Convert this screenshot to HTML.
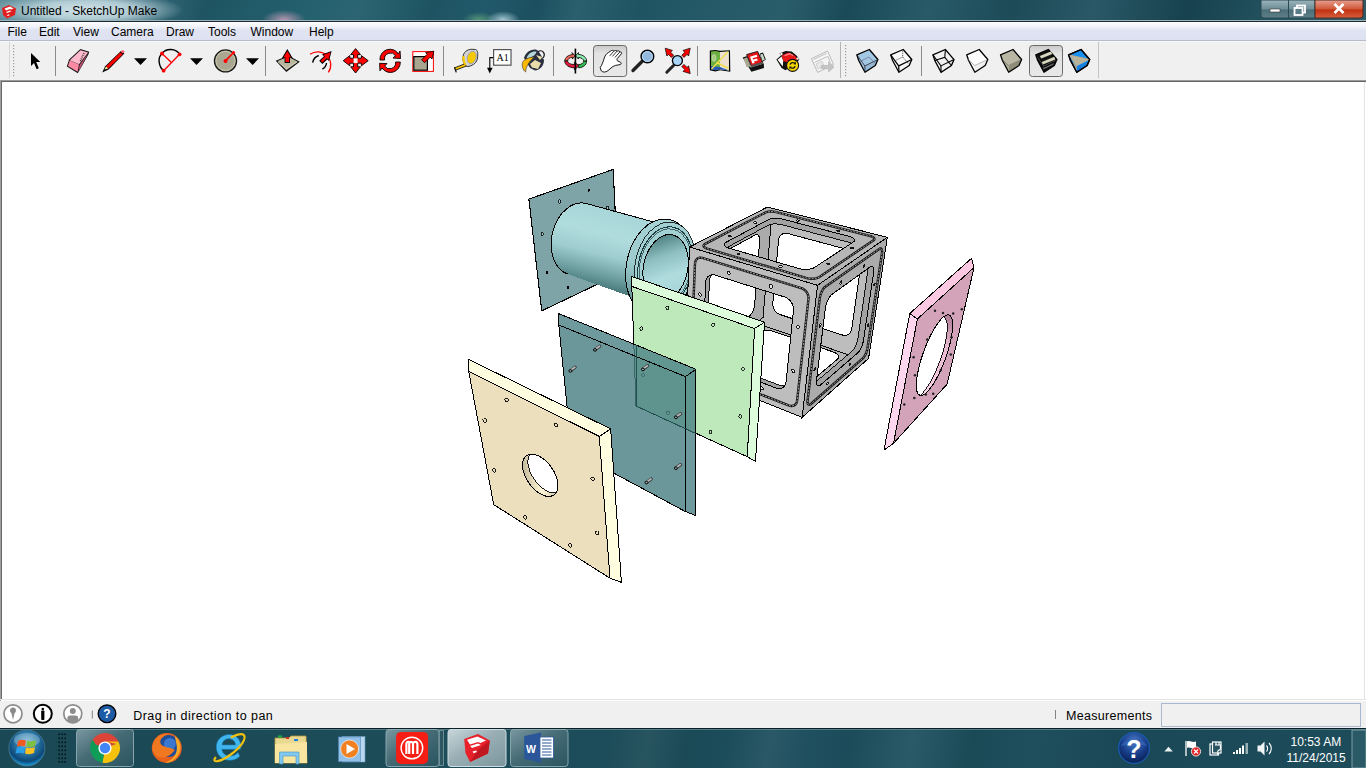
<!DOCTYPE html>
<html><head><meta charset="utf-8">
<style>
*{margin:0;padding:0;box-sizing:border-box}
html,body{width:1366px;height:768px;overflow:hidden;background:#fff;font-family:"Liberation Sans",sans-serif}
.a{position:absolute}
#title{left:0;top:0;width:1366px;height:20px;overflow:hidden;background:linear-gradient(105deg,#5e8e9a 0px,#3e7080 120px,#1f5563 200px,#24606e 300px,#2c6472 350px,#1e5462 420px,#22596a 470px,#1c5060 520px,#2a606e 560px,#1f5563 620px,#265a68 700px,#2a5d6a 760px,#1a4a58 820px,#285a68 900px,#1d4b58 980px,#2a5866 1060px,#17414e 1150px,#23525e 1230px,#335f6a 1300px,#2a5560 1366px)}
#title .t{left:21px;top:4px;font-size:12px;color:#000}
#menu{left:0;top:22px;width:1366px;height:18px;background:linear-gradient(#fdfdff 0%,#f1f3fa 25%,#e0e4f2 45%,#dde1f1 100%)}
#menu span{position:absolute;top:3px;font-size:12px;color:#000}
#tb{left:0;top:40px;width:1366px;height:40px;background:#f0f0f0;border-top:1px solid #b8bcc8}
#canvas{left:0;top:80px;width:1366px;height:621px;background:#fff;border-top:1px solid #9a9a9a;border-left:1px solid #a0a0a0}
#status{left:0;top:701px;width:1366px;height:27px;background:#f0f0f0}
#task{left:0;top:728px;width:1366px;height:40px;background:linear-gradient(100deg,#1a4854 0px,#1c4c58 300px,#1d4d5a 600px,#27545f 640px,#1b4a57 680px,#1c4d5a 720px,#2a5866 760px,#1f5060 800px,#1c4c5a 840px,#2a5a68 900px,#1b4a57 960px,#1f4f5d 1020px,#1b4856 1100px,#1d4c5a 1366px)}
#status span{position:absolute;top:708px;font-size:12px;color:#000}
</style></head><body>
<svg width="0" height="0" style="position:absolute"><defs><linearGradient id="pressg" x1="0" y1="0" x2="0" y2="1"><stop offset="0" stop-color="#c8c8c8"/><stop offset="0.25" stop-color="#e2e2e2"/><stop offset="1" stop-color="#e8e8e8"/></linearGradient></defs></svg>
<div id="title" class="a"><div class="a" style="left:-12px;top:-8px;width:196px;height:36px;background:radial-gradient(ellipse 50% 50% at 50% 50%,rgba(215,232,236,0.95) 0%,rgba(195,218,225,0.85) 50%,rgba(120,165,175,0) 100%)"></div><div class="a" style="left:262px;top:10px;width:44px;height:20px;background:radial-gradient(ellipse 50% 50% at 50% 50%,rgba(230,170,200,0.75) 0%,rgba(200,150,180,0) 100%)"></div><div class="a" style="left:462px;top:12px;width:34px;height:16px;background:radial-gradient(ellipse 50% 50% at 50% 50%,rgba(120,190,130,0.6) 0%,rgba(120,190,130,0) 100%)"></div><div class="a" style="left:486px;top:11px;width:34px;height:18px;background:radial-gradient(ellipse 50% 50% at 50% 50%,rgba(200,230,240,0.8) 0%,rgba(200,230,240,0) 100%)"></div><svg class="a" style="left:1px;top:3px" width="16" height="16" viewBox="0 0 16 16"><path d="M1 5 L8 2 L15 5.5 L14 12 L6 15.5 L2 12Z" fill="#e02020"/><path d="M3.5 5.5 L9 3.5 L12.5 5.5 L10 6.5 L9 6 L5 7.5Z M5 9 L9 7.5 L10.5 8.3 L6.2 10Z M6 12 L8 11.3 L8.6 12.2 L6.6 13Z" fill="#fff"/></svg><div class="a t">Untitled - SketchUp Make</div></div>
<div id="menu" class="a"><span style="left:7.5px">File</span><span style="left:39px">Edit</span><span style="left:73px">View</span><span style="left:111px">Camera</span><span style="left:166px">Draw</span><span style="left:208px">Tools</span><span style="left:250.5px">Window</span><span style="left:309px">Help</span></div>
<div id="tb" class="a"></div>
<div id="canvas" class="a"></div><div class="a" style="left:1px;top:81px;width:1365px;height:1px;background:#666"></div><div class="a" style="left:1px;top:81px;width:1px;height:618px;background:#696969"></div><div class="a" style="left:0;top:699px;width:1366px;height:1px;background:#e3e3e3"></div><div class="a" style="left:1364px;top:82px;width:1px;height:617px;background:#e3e3e3"></div><div class="a" style="left:0;top:20px;width:1366px;height:1px;background:#9cb2ba"></div><div class="a" style="left:0;top:21px;width:1366px;height:1px;background:#1c2c32"></div><div class="a" style="left:0;top:41px;width:1366px;height:1px;background:#f5f7fb"></div>
<div id="status" class="a"></div>
<div class="a" style="left:133.2px;top:708.5px;font-size:12.5px;letter-spacing:0.45px;color:#000">Drag in direction to pan</div>
<div class="a" style="left:1066px;top:708.5px;font-size:12.5px;letter-spacing:0.3px;color:#000">Measurements</div>
<div id="task" class="a"></div>
<svg class="a" style="left:0;top:0" width="1366" height="80" viewBox="0 0 1366 80">
<!-- toolbar frame -->
<line x1="9.5" y1="42" x2="9.5" y2="78" stroke="#d6d6d6"/>
<g fill="#9a9a9a"><rect x="13" y="45" width="1.2" height="1.2"/><rect x="13" y="48" width="1.2" height="1.2"/><rect x="13" y="51" width="1.2" height="1.2"/><rect x="13" y="54" width="1.2" height="1.2"/><rect x="13" y="57" width="1.2" height="1.2"/><rect x="13" y="60" width="1.2" height="1.2"/><rect x="13" y="63" width="1.2" height="1.2"/><rect x="13" y="66" width="1.2" height="1.2"/><rect x="13" y="69" width="1.2" height="1.2"/><rect x="13" y="72" width="1.2" height="1.2"/><rect x="13" y="75" width="1.2" height="1.2"/></g>
<g stroke="#8a8a8a" stroke-width="1"><line x1="55.5" y1="46" x2="55.5" y2="76"/><line x1="265.5" y1="46" x2="265.5" y2="76"/><line x1="443.5" y1="46" x2="443.5" y2="76"/><line x1="553.5" y1="46" x2="553.5" y2="76"/><line x1="697.5" y1="46" x2="697.5" y2="76"/><line x1="921.5" y1="46" x2="921.5" y2="76"/></g>
<line x1="840.5" y1="42" x2="840.5" y2="78" stroke="#b4b4b4"/>
<line x1="1098.5" y1="42" x2="1098.5" y2="78" stroke="#c4c4c4"/>
<g fill="#9a9a9a"><rect x="845" y="45" width="1.2" height="1.2"/><rect x="845" y="48" width="1.2" height="1.2"/><rect x="845" y="51" width="1.2" height="1.2"/><rect x="845" y="54" width="1.2" height="1.2"/><rect x="845" y="57" width="1.2" height="1.2"/><rect x="845" y="60" width="1.2" height="1.2"/><rect x="845" y="63" width="1.2" height="1.2"/><rect x="845" y="66" width="1.2" height="1.2"/><rect x="845" y="69" width="1.2" height="1.2"/><rect x="845" y="72" width="1.2" height="1.2"/><rect x="845" y="75" width="1.2" height="1.2"/></g>
<!-- select -->
<path d="M31 53 L31 66 L34 63 L36.6 69.2 L38.8 68.2 L36.2 62 L40.3 62 Z" fill="#000"/>
<!-- eraser -->
<path d="M66.8 66.6 L69.1 59.4 L80.4 49.1 L89.3 51.7 L88.3 54.8 L77.8 73.2 Z" fill="#1a1a1a"/>
<path d="M68 66 L69.8 60.5 L79 64.6 L77.6 71.8 Z" fill="#ff8aa3"/>
<path d="M69.8 60.2 L80.5 50.2 L88 52.4 L79 64.2 Z" fill="#ffb8cc"/>
<path d="M79.6 65 L88 53.5 L78.5 71.5 Z" fill="#c05070"/>
<path d="M84 53 L80 62" stroke="#333" stroke-width="1.5" stroke-dasharray="1 1"/>
<!-- pencil -->
<path d="M102.2 72.4 L105.2 66.2 L121.2 50.8 L124.4 53.4 L108.6 69.4 Z" fill="#000"/>
<path d="M106 66.6 L120.2 52.5 L122.6 54.4 L108.2 68.6 Z" fill="#f00"/>
<path d="M104.5 69.6 L106 66.6 L108.2 68.6 Z" fill="#f8f0a0"/>
<path d="M120.6 51.6 L123 49.9 L124.8 51.8 L122.7 53.6 Z" fill="#ff6070"/>
<!-- dropdowns -->
<path d="M134 58.2 L147 58.2 L140.5 65 Z" fill="#000"/>
<path d="M190 58.2 L203 58.2 L196.5 65 Z" fill="#000"/>
<path d="M246 58.2 L259 58.2 L252.6 65 Z" fill="#000"/>
<!-- arc -->
<path d="M162 53.5 C 166 48 176 48 179.6 54.3" fill="none" stroke="#000" stroke-width="1.4"/>
<path d="M162 53.5 C 157 58 159 67 163.6 70.7" fill="none" stroke="#000" stroke-width="1.4"/>
<path d="M163.6 70.7 L179.6 54.3 M162 53.5 L171.2 62.2" stroke="#f00" stroke-width="1.3"/>
<circle cx="162" cy="53.5" r="1.9" fill="#f00"/><circle cx="179.6" cy="54.3" r="1.9" fill="#f00"/><circle cx="163.6" cy="70.7" r="1.9" fill="#f00"/>
<!-- protractor -->
<circle cx="225.5" cy="60.9" r="11" fill="#a9a791" stroke="#1a1a1a" stroke-width="1.4"/>
<circle cx="225.5" cy="60.9" r="9.6" fill="none" stroke="#d8d4b4" stroke-width="0.7"/>
<path d="M225.5 60.9 L233.7 52.2" stroke="#f00" stroke-width="1.6"/>
<circle cx="225.5" cy="60.9" r="2" fill="#f00"/><circle cx="233.5" cy="52.6" r="1.6" fill="#f00"/>
<!-- push pull -->
<path d="M275.7 60.7 L288.3 55.6 L299.8 61.7 L286.3 72 Z" fill="#111"/>
<path d="M277.6 61 L288.3 56.8 L297.8 61.8 L286.3 70.2 Z" fill="#b9b79e"/>
<path d="M278 62 L286.3 68.5 L297 62" fill="none" stroke="#d8d6c0" stroke-width="0.8"/>
<path d="M287.3 49 L292.6 58 L290 58 L290 63 L284.6 63 L284.6 58 L282 58 Z" fill="#000"/>
<path d="M287.3 51 L291 57.2 L289.2 57.2 L289.2 62 L285.4 62 L285.4 57.2 L283.6 57.2 Z" fill="#f00"/>
<!-- follow me -->
<path d="M310.1 54.3 A 13 13 0 0 1 328.3 72.4" fill="none" stroke="#f00" stroke-width="1.3"/>
<path d="M312.7 62.7 A 9 9 0 0 1 318.8 55.5 M322.4 69.1 A 8 8 0 0 0 326.5 63" fill="none" stroke="#000" stroke-width="1.4"/>
<path d="M331.6 51 L329 61 L327.2 59.4 L322.4 64 L319.2 60.8 L324 56.2 L322 54.4 Z" fill="#000"/>
<path d="M330.6 52.2 L328.4 59.6 L326.8 58.2 L322.4 62.5 L320.6 60.8 L325 56.4 L323.4 55 Z" fill="#f00"/>
<!-- move -->
<path d="M355.6 48.6 L360.5 54.6 L357.7 54.6 L357.7 58.2 L361.4 58.2 L361.4 55.6 L368.2 60.7 L361.4 65.8 L361.4 63.2 L357.7 63.2 L357.7 66.8 L360.5 66.8 L355.6 73 L350.7 66.8 L353.5 66.8 L353.5 63.2 L349.8 63.2 L349.8 65.8 L343.2 60.7 L349.8 55.6 L349.8 58.2 L353.5 58.2 L353.5 54.6 L350.7 54.6 Z" fill="#f00" stroke="#000" stroke-width="0.9"/>
<rect x="353.6" y="58.3" width="4" height="4.8" fill="#f4f4f4"/>
<!-- rotate -->
<path d="M380 60 A 10 10 0 0 1 398.5 54 L400 51 L400.5 58.5 L393 58 L395.6 55.8 A 6 6 0 0 0 384.6 60 Z" fill="#f00" stroke="#000" stroke-width="0.9"/>
<path d="M400.3 62 A 10 10 0 0 1 382 68 L380 70.8 L379.6 63.3 L387 63.6 L384.6 66 A 6 6 0 0 0 395.6 62 Z" fill="#f00" stroke="#000" stroke-width="0.9"/>
<!-- scale -->
<rect x="412.8" y="51.6" width="20.6" height="19.8" fill="#fff" stroke="#f00" stroke-width="1"/>
<rect x="413.8" y="56.6" width="13.6" height="13.6" fill="#a8a68e" stroke="#000" stroke-width="1.2"/>
<path d="M433.8 51.2 L432 59 L430.2 57.2 L424.6 62.8 L421.6 59.8 L427.2 54.2 L425.6 52.6 Z" fill="#f00" stroke="#000" stroke-width="0.8"/>
<!-- tape -->
<path d="M454 68 L465.5 63.6 L466.5 66 L456 70" fill="#f5c400" stroke="#000" stroke-width="0.8"/>
<path d="M454.5 67.5 L456.3 72.4" stroke="#111" stroke-width="1.3"/>
<path d="M463 58 C 463 52 467 49.3 472 49.3 L 475.5 49.5 C 478 50.5 478 53 477.5 58 C 477 62 474 65.5 468 66.5 L 466 66 C 463.5 64 462.8 61 463 58 Z" fill="#d4d4d8" stroke="#222" stroke-width="0.9"/>
<ellipse cx="471.7" cy="57.5" rx="4.4" ry="6.4" transform="rotate(20 471.7 57.5)" fill="#f5c800" stroke="#8898c8" stroke-width="0.7"/>
<path d="M463.5 56 C 463.2 60 464 63 466 65" fill="none" stroke="#f5c800" stroke-width="2.2"/>
<!-- text -->
<rect x="493.6" y="49.6" width="17.4" height="15.6" fill="#fff" stroke="#555" stroke-width="1.2"/>
<text x="496.5" y="61" font-family="Liberation Serif" font-size="10" fill="#000">A1</text>
<path d="M493.2 57.6 L489.8 57.6 L489.8 70" fill="none" stroke="#000" stroke-width="1.1"/>
<path d="M487 67.8 L492.6 67.8 L489.8 73.5 Z" fill="#000"/>
<!-- paint -->
<path d="M524 58 C 526 51 533 48.5 537 50 L 539 52 L 544 60 C 544 66 540 70 535 70.5 L 530 68 L 527 63 Z" fill="#2a2f40"/>
<path d="M526.5 58.6 C 528 53 533 50.8 536.5 51.8 C 536 55 531 58 526.5 58.6 Z" fill="#b4d8d8"/>
<path d="M530 64 L 535 60 L 541 63 L 538 69 L 532 67.5 Z" fill="#e8dcaa"/>
<path d="M536 55 L 540 60 L 542.5 57 Z" fill="#e8dcaa"/>
<path d="M538 51.5 C 543 49 546 54 543 58" fill="none" stroke="#111" stroke-width="1.2"/>
<path d="M534.3 57 C 529 57.5 524 59 522.5 62.5 C 521.5 66 523 70 525.6 72 C 526 68 527.5 63 534.3 57 Z" fill="#f8b800" stroke="#333" stroke-width="0.6"/>
<!-- orbit -->
<path d="M564.8 61 C 564.8 57.5 568 55.2 572.5 54.6 L 572 52.6 L 575 55.8 L 572.4 59 L 572.3 57.2 C 569.5 57.6 567.8 59 567.6 61 Z" fill="#f46a58" stroke="#111" stroke-width="0.9" stroke-linejoin="round"/>
<path d="M564.8 61 C 564.8 65 569 67.6 574.5 67.9 L 574.6 70 L 579 65.4 L 574.4 62.4 L 574.5 64.6 C 570.5 64.4 567.8 63 567.6 61 Z" fill="#e8183a" stroke="#111" stroke-width="0.9" stroke-linejoin="round"/>
<path d="M586.6 61.2 C 586.6 57.2 583 54.8 578.4 54.4 L 578.4 52.6 L 575.6 55.9 L 578.4 59 L 578.4 57.4 C 581.8 57.8 583.6 59.2 583.8 61.2 Z" fill="#8af0b0" stroke="#111" stroke-width="0.9" stroke-linejoin="round"/>
<path d="M586.6 61.2 C 586.6 65 583 67.4 578.8 67.9 L 578.4 64.8 C 581.6 64.4 583.6 63 583.8 61.2 Z" fill="#2ec050" stroke="#111" stroke-width="0.9" stroke-linejoin="round"/>
<path d="M575.4 48.6 L 575.4 73.5" stroke="#000" stroke-width="1.6"/>
<!-- pan pressed -->
<rect x="593.5" y="45.5" width="33.2" height="31" rx="3" fill="url(#pressg)" stroke="#6a6a6a" stroke-width="1"/>
<path d="M600.2 67.6 C 602 65 603.2 61.5 604.2 58.2 C 605 55.5 606.5 53.6 608.6 52.4 L 611.4 50.6 C 612.4 50 613.6 50.4 613.8 51.2 C 614.8 50.4 616.4 50.2 617.2 51 C 618.2 50.6 619.6 50.8 619.8 52 C 620.8 51.8 622 52.4 621.6 53.6 L 617.4 58.4 C 616.6 59.4 616.8 60.6 617.8 61 L 620.4 62.2 C 621.4 62.8 621.4 64.2 620.2 64.6 L 615.6 65.4 C 613.6 65.8 612.4 66.8 611 68 L 608 70.6 C 605.5 72.6 603 72.4 601.4 71 Z" fill="#fff" stroke="#000" stroke-width="0.9" stroke-linejoin="round"/>
<path d="M613.8 51.2 L 609.8 55.8 M617.2 51 L 612.4 56.4 M619.8 52 L 614.8 57.6" stroke="#000" stroke-width="0.8"/>
<!-- zoom -->
<path d="M633 70.5 L 642 61.5" stroke="#222" stroke-width="3.4" stroke-linecap="round"/>
<circle cx="647.4" cy="56.5" r="6.3" fill="#95b9de" stroke="#000" stroke-width="1.5"/>
<circle cx="647.4" cy="56.5" r="5" fill="none" stroke="#b8e0f8" stroke-width="0.9"/>
<!-- zoom extents -->
<path d="M666.8 72.2 L 673.5 65.5" stroke="#222" stroke-width="3" stroke-linecap="round"/>
<circle cx="677.4" cy="60.6" r="5" fill="#a8d4f8" stroke="#000" stroke-width="1.3"/>
<path d="M665.2 48.2 L 672.4 50.4 L 670.6 52.2 L 673.6 55.2 L 671.4 57.4 L 668.4 54.4 L 666.8 56 Z" fill="#f00" stroke="#000" stroke-width="0.7"/>
<path d="M690.2 48.2 L 683 50.4 L 684.8 52.2 L 681.8 55.2 L 684 57.4 L 687 54.4 L 688.6 56 Z" fill="#f00" stroke="#000" stroke-width="0.7"/>
<path d="M690.2 73.6 L 683 71.4 L 684.8 69.6 L 681.8 66.6 L 684 64.4 L 687 67.4 L 688.6 65.8 Z" fill="#f00" stroke="#000" stroke-width="0.7"/>
<!-- map -->
<path d="M709.8 50.5 L 715.3 50 L 720 50.8 L 730 50.3 L 730.3 71.8 L 720 70.3 L 715.3 71.4 L 709.8 70.2 Z" fill="#000"/>
<path d="M711 51.5 L 715.3 51.1 L 720 51.9 L 728.8 51.4 L 729 70.4 L 720 69.2 L 715.3 70.3 L 711 69.2 Z" fill="#6ab040"/>
<path d="M720 51.9 L 728.8 51.4 L 729 70.4 L 720 69.2 Z" fill="#eee0d0"/>
<path d="M711 66 L 720 67 L 729 70.4 L 720 69.2 L 715.3 70.3 L 711 69.2 Z" fill="#2858b8"/>
<path d="M711.5 69 L 728 51.8 M716.5 62.5 L 729 68.5" stroke="#f0e050" stroke-width="1.4"/>
<ellipse cx="714" cy="58" rx="2" ry="3.4" fill="#a0d070" stroke="#ccc" stroke-width="0.8"/>
<!-- warehouse -->
<path d="M742.6 57.6 L 747.4 56 L 750.6 67.6 L 763.8 63.4 L 764 68 L 751.4 71.8 Z" fill="#111"/>
<path d="M743.6 58.4 L 747.4 57.2 L 750.4 66.4 L 746.6 67.2 Z" fill="#a8a890"/>
<path d="M759.8 53.4 L 763 52.6 L 765.8 59.4 L 762.4 62 Z" fill="#111"/>
<path d="M760.4 54.4 L 762.6 53.8 L 764.8 59.4 L 762.4 61 Z" fill="#c8d8c8"/>
<path d="M746.6 54.6 L 757.6 51.4 L 762.6 62.6 L 751.4 66.2 Z" fill="#e81418" stroke="#111" stroke-width="0.9"/>
<path d="M750 56.8 L 756.6 54.8 L 757.4 56.8 L 752.6 58.2 L 753.2 59.6 L 757 58.6 L 757.8 60.4 L 754 61.6 L 754.6 63 L 752.4 63.6 Z" fill="#fff"/>
<path d="M750.4 65.4 L 762.6 61.8 L 763.8 63.4 L 751.6 67.6 Z" fill="#555"/>
<!-- share -->
<path d="M776.4 59.6 L 781 55.6 L 779.4 53.4 L 785.6 51 L 791.6 51.6 L 796 55 L 799.4 59 L 797 63 L 785.4 70.2 L 781.6 68 Z" fill="#111"/>
<path d="M777.6 59.8 L 781.6 56.4 L 783.2 60.8 L 782.8 66.6 Z" fill="#fff"/>
<path d="M781.6 55.4 L 788.4 52.4 L 795 55.8 L 797.6 59.4 L 790 63.6 L 783.4 61 Z" fill="#e81818"/>
<path d="M784.6 55.6 L 790 53.6 L 793 55.4" fill="none" stroke="#ff9090" stroke-width="1.2"/>
<circle cx="781.4" cy="54" r="1.2" fill="#fff"/><circle cx="797.6" cy="58.6" r="1.2" fill="#fff"/>
<circle cx="792.6" cy="65.4" r="6" fill="#f8d800" stroke="#111" stroke-width="1.1"/>
<path d="M789.4 64.6 C 789.8 62.2 792.8 61.2 794.8 62.6 L 795.6 61.6 L 796 64.4 L 793.4 64.2 L 794.2 63.6 C 792.8 62.8 791 63.4 790.8 64.8 Z M795.8 66.2 C 795.4 68.6 792.4 69.6 790.4 68.2 L 789.6 69.2 L 789.2 66.4 L 791.8 66.6 L 791 67.2 C 792.4 68 794.2 67.4 794.4 66 Z" fill="#111"/>
<!-- dimmed -->
<path d="M811.4 58.6 L 827.6 51 L 833.6 64.6 L 817.6 72.4 Z" fill="#f4f4f4" stroke="#bbb" stroke-width="1"/>
<path d="M813.4 59.4 L 826.4 53.4 M 814.6 62.4 L 827.8 56.4 L 830.4 62.4" fill="none" stroke="#c0c0c0" stroke-width="1"/>
<path d="M816 64 L 822 61.2 L 824 66 L 818 68.8 Z" fill="#e8e8e8" stroke="#c8c8c8" stroke-width="0.8"/>
<path d="M821.4 65.4 L 828.6 65.4 L 828.6 61.8 L 834 67 L 828.6 72 L 828.6 68.6 L 821.4 68.6 Z" fill="#c4c4c4" stroke="#b0b0b0" stroke-width="0.6"/>
<polygon points="856.8,54.8 869.3,49.5 877.9,59.5 864.8,65.9" fill="#a3c8e4"/>
<polygon points="856.8,54.8 864.8,65.9 865.0,72.2 858.7,60.5" fill="#9cc2de"/>
<polygon points="864.8,65.9 877.9,59.5 875.3,65.5 865.0,72.2" fill="#94b8d4"/>

<polygon points="856.8,54.8 869.3,49.5 877.9,59.5 875.3,65.5 865.0,72.2 858.7,60.5" fill="none" stroke="#000" stroke-width="1.3" stroke-linejoin="round"/>
<polyline points="856.8,54.8 864.8,65.9 877.9,59.5" fill="none" stroke="#223" stroke-width="0.8"/>
<polyline points="864.8,65.9 865.0,72.2" fill="none" stroke="#223" stroke-width="0.8"/>
<polyline points="868.8,57.0 860.3,61.5" fill="none" stroke="#557" stroke-width="0.6"/>
<polyline points="868.8,57.0 875.8,64.0" fill="none" stroke="#557" stroke-width="0.6"/>
<polygon points="890.7,54.8 903.2,49.5 911.8,59.5 898.7,65.9" fill="#fafafa"/>
<polygon points="890.7,54.8 898.7,65.9 898.9,72.2 892.6,60.5" fill="#f8f8f8"/>
<polygon points="898.7,65.9 911.8,59.5 909.2,65.5 898.9,72.2" fill="#f4f4f4"/>

<polygon points="890.7,54.8 903.2,49.5 911.8,59.5 909.2,65.5 898.9,72.2 892.6,60.5" fill="none" stroke="#000" stroke-width="1.3" stroke-linejoin="round"/>
<polyline points="890.7,54.8 898.7,65.9 911.8,59.5" fill="none" stroke="#000" stroke-width="1.2"/>
<polyline points="898.7,65.9 898.9,72.2" fill="none" stroke="#000" stroke-width="1.2"/>
<polyline points="902.7,50.5 902.7,57.0 894.2,61.0" fill="none" stroke="#444" stroke-width="0.9" stroke-dasharray="1.2 1"/>
<polyline points="902.7,57.0 908.7,64.0" fill="none" stroke="#444" stroke-width="0.9" stroke-dasharray="1.2 1"/>
<polygon points="932.9,54.8 945.4,49.5 954.0,59.5 951.4,65.5 941.1,72.2 934.8,60.5" fill="none" stroke="#000" stroke-width="1.3"/>
<polyline points="932.9,54.8 940.9,65.9 954.0,59.5" fill="none" stroke="#000" stroke-width="1.1"/>
<polyline points="940.9,65.9 941.1,72.2" fill="none" stroke="#000" stroke-width="1.1"/>
<polyline points="945.4,49.5 944.8,57.3 934.8,60.5" fill="none" stroke="#000" stroke-width="1.1"/>
<polyline points="944.8,57.3 951.4,65.5" fill="none" stroke="#000" stroke-width="1.1"/>
<polygon points="966.7,54.8 979.2,49.5 987.8,59.5 974.7,65.9" fill="#fdfdfd"/>
<polygon points="966.7,54.8 974.7,65.9 974.9,72.2 968.6,60.5" fill="#f6f6f6"/>
<polygon points="974.7,65.9 987.8,59.5 985.2,65.5 974.9,72.2" fill="#f0f0f0"/>

<polygon points="966.7,54.8 979.2,49.5 987.8,59.5 985.2,65.5 974.9,72.2 968.6,60.5" fill="none" stroke="#000" stroke-width="1.3" stroke-linejoin="round"/>
<polyline points="968.2,59.5 974.7,65.5 987.2,59.8" fill="none" stroke="#999" stroke-width="0.7"/>
<polygon points="1000.5,54.8 1013.0,49.5 1021.6,59.5 1008.5,65.9" fill="#b9b7a3"/>
<polygon points="1000.5,54.8 1008.5,65.9 1008.7,72.2 1002.4,60.5" fill="#a9a792"/>
<polygon points="1008.5,65.9 1021.6,59.5 1019.0,65.5 1008.7,72.2" fill="#8f8d78"/>

<polygon points="1000.5,54.8 1013.0,49.5 1021.6,59.5 1019.0,65.5 1008.7,72.2 1002.4,60.5" fill="none" stroke="#000" stroke-width="1.3" stroke-linejoin="round"/>
<polyline points="1002.0,59.5 1008.5,65.5 1021.0,59.8" fill="none" stroke="#555" stroke-width="0.5"/>
<rect x="1029.5" y="45.5" width="33" height="31" rx="3" fill="url(#pressg)" stroke="#6a6a6a" stroke-width="1"/>
<polygon points="1035.8,54.8 1048.3,49.5 1056.9,59.5 1043.8,65.9" fill="#111"/>
<polygon points="1035.8,54.8 1043.8,65.9 1044.0,72.2 1037.7,60.5" fill="#111"/>
<polygon points="1043.8,65.9 1056.9,59.5 1054.3,65.5 1044.0,72.2" fill="#111"/>

<polygon points="1035.8,54.8 1048.3,49.5 1056.9,59.5 1054.3,65.5 1044.0,72.2 1037.7,60.5" fill="none" stroke="#000" stroke-width="1.3" stroke-linejoin="round"/>
<polygon points="1039.8,56.0 1050.8,51.5 1052.3,54.0 1041.3,58.5" fill="#d8d6be"/>
<polygon points="1041.8,62.0 1054.3,56.8 1055.3,59.5 1042.8,64.5" fill="#d8d6be"/>
<polygon points="1043.3,68.0 1053.8,63.2 1053.4,64.6 1043.6,69.2" fill="#777"/>
<polygon points="1068.6,54.8 1081.1,49.5 1089.7,59.5 1076.6,65.9" fill="#1890f0"/>
<polygon points="1068.6,54.8 1076.6,65.9 1076.8,72.2 1070.5,60.5" fill="#1070d0"/>
<polygon points="1076.6,65.9 1089.7,59.5 1087.1,65.5 1076.8,72.2" fill="#1480e0"/>

<polygon points="1068.6,54.8 1081.1,49.5 1089.7,59.5 1087.1,65.5 1076.8,72.2 1070.5,60.5" fill="none" stroke="#000" stroke-width="1.3" stroke-linejoin="round"/>
<polygon points="1068.6,54.8 1089.7,59.5 1076.6,65.9" fill="#b8b49c"/>
<polygon points="1068.6,54.8 1076.6,65.9 1076.8,72.2 1071.6,59.0" fill="#a8a48c"/>
<polyline points="1068.6,54.8 1089.7,59.5" fill="none" stroke="#d0a878" stroke-width="0.8"/>
<polygon points="1068.6,54.8 1081.1,49.5 1089.7,59.5 1087.1,65.5 1076.8,72.2 1070.5,60.5" fill="none" stroke="#000" stroke-width="1.3"/>
</svg>

<svg class="a" style="left:0;top:0" width="1366" height="768" viewBox="0 0 1366 768" shape-rendering="crispEdges">
<polygon points="528.9,199.1 613.2,169.4 618.2,274.3 541.7,310.9" fill="#7fa4a7" stroke="#000" stroke-width="1.1" stroke-linejoin="round" />
<ellipse cx="559.6" cy="201.5" rx="1.4" ry="1.7" fill="#a8c8ca" stroke="#000" stroke-width="0.8"/>
<ellipse cx="588.75" cy="190.2" rx="1.3" ry="1.6" fill="#000"/>
<ellipse cx="607.5" cy="208.1" rx="1.4" ry="1.7" fill="#a8c8ca" stroke="#000" stroke-width="0.8"/>
<ellipse cx="542.4" cy="234.2" rx="1.4" ry="1.7" fill="#a8c8ca" stroke="#000" stroke-width="0.8"/>
<ellipse cx="547" cy="272.4" rx="1.3" ry="1.6" fill="#000"/>
<ellipse cx="567.8" cy="287.4" rx="1.3" ry="1.6" fill="#000"/>
<defs><linearGradient id="cylg" gradientUnits="userSpaceOnUse" x1="590" y1="205" x2="570" y2="285"><stop offset="0" stop-color="#a8d6d8"/><stop offset="0.3" stop-color="#b0dcdd"/><stop offset="0.55" stop-color="#9fcdcf"/><stop offset="0.8" stop-color="#6a9c9e"/><stop offset="1" stop-color="#3c6c6e"/></linearGradient><linearGradient id="boreg" gradientUnits="userSpaceOnUse" x1="650" y1="240" x2="680" y2="290"><stop offset="0" stop-color="#4f8082"/><stop offset="0.35" stop-color="#8ebfc1"/><stop offset="0.7" stop-color="#b0dcde"/><stop offset="1" stop-color="#a8d6d8"/></linearGradient><linearGradient id="flg" gradientUnits="userSpaceOnUse" x1="640" y1="220" x2="640" y2="300"><stop offset="0" stop-color="#a6d3d5"/><stop offset="0.6" stop-color="#9ccbcd"/><stop offset="1" stop-color="#6d9ea0"/></linearGradient></defs>
<path d="M587.2 203.8 L659.2 223.5 L640.1 300.0 L568.1 274.2 A25.9 36.5 12.7 0 1 587.2 203.8 Z" fill="url(#cylg)" stroke="none" stroke-width="1" />
<path d="M568.1 274.2 A25.9 36.5 12.7 0 1 587.2 203.8 L659.2 223.5" fill="none" stroke="#000" stroke-width="1" />
<ellipse cx="660.05" cy="268.15" rx="33.8" ry="49.4" transform="rotate(9.7 660.05 268.15)" fill="url(#flg)" stroke="#000" stroke-width="1"/>
<ellipse cx="665.0" cy="266.5" rx="30.0" ry="45.0" transform="rotate(10.5 665 266.5)" fill="#a3d0d2" stroke="#000" stroke-width="0.8"/>
<ellipse cx="665.3" cy="267.0" rx="27.0" ry="40.6" transform="rotate(11 665.3 267)" fill="none" stroke="#1a3a3c" stroke-width="1.1"/>
<ellipse cx="665.3" cy="267.0" rx="25.6" ry="38.6" transform="rotate(11 665.3 267)" fill="none" stroke="#2a4a4c" stroke-width="0.8"/>
<ellipse cx="665.58" cy="267.9" rx="22.1" ry="33.7" transform="rotate(11.8 665.58 267.9)" fill="url(#boreg)" stroke="#000" stroke-width="1"/>
<defs>
<clipPath id="cz"><path d="M806.12 408.91 L866.68 355.66 L861.27 353.83 L863.97 351.49 L763.06 317.64 L760.09 319.66 L755.46 318.10 L688.76 363.00 L693.61 364.90 L689.96 367.38 L797.00 409.58 L800.37 406.66 Z"/></clipPath>
<clipPath id="cx"><path d="M860.51 358.91 L759.69 324.48 L760.09 319.66 L755.46 318.10 L763.80 214.17 L768.77 215.45 L769.23 209.94 L878.68 237.70 L877.80 243.56 L883.66 245.07 L866.68 355.66 L861.27 353.83 Z"/></clipPath>
<clipPath id="cy"><path d="M693.39 370.06 L759.69 324.48 L760.09 319.66 L763.06 317.64 L771.89 213.80 L768.77 215.45 L769.23 209.94 L698.67 246.59 L698.41 252.57 L694.53 254.61 L689.96 367.38 L693.61 364.90 Z"/></clipPath>
</defs>
<g clip-path="url(#cz)"><path d="M802.77 411.86 L869.36 353.30 L758.44 316.09 L685.10 365.46 Z M772.03 330.96 L770.37 330.49 L768.58 330.18 L766.74 330.03 L764.90 330.06 L763.15 330.25 L761.54 330.61 L760.13 331.12 L758.98 331.77 L719.17 359.54 L718.20 360.39 L717.59 361.32 L717.34 362.31 L717.48 363.32 L718.01 364.31 L718.90 365.24 L720.13 366.07 L721.64 366.77 L785.70 391.38 L787.60 391.99 L789.64 392.39 L791.75 392.58 L793.83 392.54 L795.81 392.29 L797.61 391.82 L799.15 391.17 L800.39 390.35 L837.61 359.06 L838.36 358.22 L838.75 357.29 L838.74 356.32 L838.36 355.34 L837.60 354.39 L836.51 353.51 L835.13 352.72 L833.51 352.05 Z" fill-rule="evenodd" fill="#b6b6b6" stroke="#000" stroke-width="1"/></g>
<path d="M806.12 408.91 L866.68 355.66 L861.27 353.83 L863.97 351.49 L763.06 317.64 L760.09 319.66 L755.46 318.10 L688.76 363.00 L693.61 364.90 L689.96 367.38 L797.00 409.58 L800.37 406.66 Z" fill="none" stroke="#000" stroke-width="0.9"/>
<g clip-path="url(#cx)"><path d="M865.90 360.75 L755.07 322.91 L764.24 208.68 L884.56 239.19 Z M778.53 240.30 L778.85 238.59 L779.48 237.03 L780.40 235.68 L781.56 234.59 L782.94 233.81 L784.48 233.36 L786.12 233.27 L787.79 233.53 L853.04 250.99 L854.84 251.66 L856.52 252.67 L858.02 253.98 L859.28 255.54 L860.25 257.28 L860.88 259.15 L861.17 261.07 L861.09 262.95 L851.72 329.11 L851.31 330.74 L850.58 332.20 L849.54 333.42 L848.26 334.36 L846.76 334.98 L845.13 335.27 L843.40 335.22 L841.67 334.82 L780.05 314.55 L778.50 313.87 L777.04 312.91 L775.73 311.69 L774.62 310.27 L773.74 308.69 L773.13 307.02 L772.82 305.32 L772.81 303.65 Z" fill-rule="evenodd" fill="#bdbdbd" stroke="#000" stroke-width="1"/></g>
<path d="M860.51 358.91 L759.69 324.48 L760.09 319.66 L755.46 318.10 L763.80 214.17 L768.77 215.45 L769.23 209.94 L878.68 237.70 L877.80 243.56 L883.66 245.07 L866.68 355.66 L861.27 353.83 Z" fill="none" stroke="#000" stroke-width="0.9"/>
<g clip-path="url(#cy)"><path d="M689.75 372.55 L762.65 322.45 L772.36 208.32 L694.77 248.61 Z M759.64 241.23 L759.67 239.53 L759.51 238.00 L759.14 236.71 L758.58 235.70 L757.86 235.02 L757.00 234.68 L756.03 234.71 L754.99 235.11 L712.82 258.15 L711.62 258.99 L710.44 260.17 L709.33 261.65 L708.33 263.36 L707.49 265.24 L706.84 267.22 L706.40 269.21 L706.19 271.14 L702.96 338.39 L702.99 340.02 L703.25 341.45 L703.73 342.60 L704.40 343.43 L705.24 343.92 L706.22 344.05 L707.30 343.81 L708.43 343.22 L748.81 316.41 L749.84 315.58 L750.84 314.47 L751.79 313.11 L752.65 311.57 L753.39 309.89 L753.98 308.14 L754.39 306.40 L754.62 304.71 Z" fill-rule="evenodd" fill="#ababab" stroke="#000" stroke-width="1"/></g>
<path d="M693.39 370.06 L759.69 324.48 L760.09 319.66 L763.06 317.64 L771.89 213.80 L768.77 215.45 L769.23 209.94 L698.67 246.59 L698.41 252.57 L694.53 254.61 L689.96 367.38 L693.61 364.90 Z" fill="none" stroke="#000" stroke-width="0.9"/>
<clipPath id="hw0"><path d="M705.77 282.14 L706.03 280.29 L706.62 278.61 L707.52 277.17 L708.69 276.03 L710.10 275.23 L711.68 274.80 L713.39 274.77 L715.15 275.13 L784.49 296.96 L786.42 297.77 L788.24 298.95 L789.87 300.46 L791.27 302.22 L792.36 304.18 L793.10 306.26 L793.48 308.37 L793.46 310.44 L786.03 382.23 L785.65 383.98 L784.93 385.52 L783.89 386.80 L782.57 387.75 L781.02 388.36 L779.31 388.58 L777.50 388.43 L775.65 387.91 L710.45 362.84 L708.81 362.03 L707.25 360.92 L705.84 359.54 L704.62 357.95 L703.65 356.20 L702.95 354.36 L702.55 352.51 L702.47 350.70 Z"/></clipPath>
<g clip-path="url(#hw0)"><path d="M705.77 282.14 L706.03 280.29 L706.62 278.61 L707.52 277.17 L708.69 276.03 L710.10 275.23 L711.68 274.80 L713.39 274.77 L715.15 275.13 L784.49 296.96 L786.42 297.77 L788.24 298.95 L789.87 300.46 L791.27 302.22 L792.36 304.18 L793.10 306.26 L793.48 308.37 L793.46 310.44 L786.03 382.23 L785.65 383.98 L784.93 385.52 L783.89 386.80 L782.57 387.75 L781.02 388.36 L779.31 388.58 L777.50 388.43 L775.65 387.91 L710.45 362.84 L708.81 362.03 L707.25 360.92 L705.84 359.54 L704.62 357.95 L703.65 356.20 L702.95 354.36 L702.55 352.51 L702.47 350.70 Z M709.57 279.95 L709.83 278.11 L710.42 276.44 L711.33 275.00 L712.50 273.86 L713.91 273.06 L715.49 272.63 L717.19 272.59 L718.95 272.95 L788.10 294.54 L790.02 295.35 L791.83 296.52 L793.46 298.01 L794.84 299.77 L795.93 301.72 L796.67 303.78 L797.04 305.88 L797.02 307.94 L789.47 379.45 L789.09 381.20 L788.37 382.73 L787.33 384.00 L786.01 384.96 L784.46 385.56 L782.75 385.80 L780.94 385.65 L779.11 385.13 L714.07 360.32 L712.44 359.53 L710.89 358.42 L709.48 357.05 L708.26 355.47 L707.29 353.73 L706.60 351.90 L706.21 350.05 L706.13 348.25 Z" fill-rule="evenodd" fill="#a2a2a2" stroke="#000" stroke-width="0.9"/></g>
<clipPath id="hw1"><path d="M873.55 273.00 L873.74 271.20 L873.74 269.59 L873.55 268.25 L873.18 267.21 L872.63 266.53 L871.94 266.24 L871.11 266.33 L870.20 266.83 L832.19 294.23 L831.08 295.21 L829.96 296.55 L828.88 298.20 L827.87 300.10 L826.98 302.17 L826.24 304.32 L825.68 306.48 L825.33 308.55 L816.50 380.12 L816.38 381.84 L816.48 383.32 L816.78 384.50 L817.28 385.32 L817.96 385.76 L818.78 385.81 L819.73 385.47 L820.75 384.75 L857.47 353.15 L858.41 352.20 L859.36 350.95 L860.29 349.45 L861.16 347.75 L861.93 345.93 L862.59 344.05 L863.10 342.18 L863.44 340.38 Z"/></clipPath>
<g clip-path="url(#hw1)"><path d="M873.55 273.00 L873.74 271.20 L873.74 269.59 L873.55 268.25 L873.18 267.21 L872.63 266.53 L871.94 266.24 L871.11 266.33 L870.20 266.83 L832.19 294.23 L831.08 295.21 L829.96 296.55 L828.88 298.20 L827.87 300.10 L826.98 302.17 L826.24 304.32 L825.68 306.48 L825.33 308.55 L816.50 380.12 L816.38 381.84 L816.48 383.32 L816.78 384.50 L817.28 385.32 L817.96 385.76 L818.78 385.81 L819.73 385.47 L820.75 384.75 L857.47 353.15 L858.41 352.20 L859.36 350.95 L860.29 349.45 L861.16 347.75 L861.93 345.93 L862.59 344.05 L863.10 342.18 L863.44 340.38 Z M867.75 271.38 L867.93 269.59 L867.92 267.98 L867.72 266.64 L867.34 265.61 L866.78 264.93 L866.08 264.63 L865.25 264.72 L864.32 265.21 L826.07 292.38 L824.96 293.36 L823.83 294.69 L822.75 296.33 L821.74 298.21 L820.85 300.27 L820.11 302.42 L819.56 304.57 L819.21 306.63 L810.70 377.98 L810.59 379.71 L810.69 381.18 L811.01 382.36 L811.52 383.18 L812.20 383.63 L813.04 383.68 L813.99 383.34 L815.01 382.63 L851.95 351.29 L852.90 350.34 L853.85 349.09 L854.78 347.60 L855.65 345.92 L856.42 344.10 L857.07 342.23 L857.58 340.36 L857.92 338.57 Z" fill-rule="evenodd" fill="#a2a2a2" stroke="#000" stroke-width="0.9"/></g>
<clipPath id="hw2"><path d="M782.25 219.07 L780.46 218.69 L778.55 218.43 L776.57 218.32 L774.61 218.33 L772.73 218.49 L771.01 218.78 L769.52 219.19 L768.30 219.71 L726.10 242.24 L725.07 242.92 L724.42 243.69 L724.17 244.50 L724.34 245.32 L724.92 246.13 L725.90 246.88 L727.23 247.57 L728.86 248.14 L798.49 268.39 L800.56 268.89 L802.78 269.22 L805.06 269.38 L807.31 269.35 L809.44 269.14 L811.37 268.76 L813.02 268.22 L814.33 267.55 L853.44 241.94 L854.22 241.25 L854.60 240.50 L854.57 239.71 L854.12 238.91 L853.27 238.14 L852.07 237.41 L850.56 236.77 L848.79 236.23 Z"/></clipPath>
<g clip-path="url(#hw2)"><path d="M782.25 219.07 L780.46 218.69 L778.55 218.43 L776.57 218.32 L774.61 218.33 L772.73 218.49 L771.01 218.78 L769.52 219.19 L768.30 219.71 L726.10 242.24 L725.07 242.92 L724.42 243.69 L724.17 244.50 L724.34 245.32 L724.92 246.13 L725.90 246.88 L727.23 247.57 L728.86 248.14 L798.49 268.39 L800.56 268.89 L802.78 269.22 L805.06 269.38 L807.31 269.35 L809.44 269.14 L811.37 268.76 L813.02 268.22 L814.33 267.55 L853.44 241.94 L854.22 241.25 L854.60 240.50 L854.57 239.71 L854.12 238.91 L853.27 238.14 L852.07 237.41 L850.56 236.77 L848.79 236.23 Z M781.74 224.69 L779.96 224.31 L778.04 224.05 L776.07 223.93 L774.12 223.95 L772.25 224.11 L770.54 224.40 L769.04 224.82 L767.83 225.35 L725.75 248.16 L724.73 248.86 L724.08 249.63 L723.83 250.45 L724.00 251.28 L724.57 252.10 L725.54 252.87 L726.87 253.56 L728.50 254.14 L797.85 274.63 L799.90 275.13 L802.11 275.47 L804.38 275.63 L806.62 275.60 L808.75 275.39 L810.67 275.01 L812.32 274.46 L813.63 273.78 L852.64 247.85 L853.42 247.16 L853.80 246.39 L853.77 245.59 L853.32 244.79 L852.48 244.00 L851.29 243.27 L849.78 242.62 L848.02 242.07 Z" fill-rule="evenodd" fill="#a2a2a2" stroke="#000" stroke-width="0.9"/></g>
<path d="M802.13 417.33 L684.91 370.62 L689.52 247.04 L817.54 285.32 Z M705.77 282.14 L706.03 280.29 L706.62 278.61 L707.52 277.17 L708.69 276.03 L710.10 275.23 L711.68 274.80 L713.39 274.77 L715.15 275.13 L784.49 296.96 L786.42 297.77 L788.24 298.95 L789.87 300.46 L791.27 302.22 L792.36 304.18 L793.10 306.26 L793.48 308.37 L793.46 310.44 L786.03 382.23 L785.65 383.98 L784.93 385.52 L783.89 386.80 L782.57 387.75 L781.02 388.36 L779.31 388.58 L777.50 388.43 L775.65 387.91 L710.45 362.84 L708.81 362.03 L707.25 360.92 L705.84 359.54 L704.62 357.95 L703.65 356.20 L702.95 354.36 L702.55 352.51 L702.47 350.70 Z" fill-rule="evenodd" fill="#bdbdbd" stroke="#000" stroke-width="1"/>
<path d="M694.98 263.73 L695.18 262.23 L695.64 260.86 L696.34 259.69 L697.27 258.75 L698.37 258.09 L699.62 257.72 L700.97 257.67 L702.36 257.94 L801.14 288.02 L802.73 288.68 L804.23 289.63 L805.57 290.85 L806.71 292.29 L807.60 293.89 L808.20 295.59 L808.50 297.32 L808.47 299.01 L797.03 401.02 L796.72 402.41 L796.13 403.62 L795.28 404.61 L794.21 405.35 L792.95 405.81 L791.56 405.97 L790.09 405.82 L788.60 405.38 L697.31 369.44 L696.03 368.81 L694.82 367.92 L693.71 366.84 L692.75 365.58 L691.99 364.21 L691.43 362.76 L691.11 361.31 L691.04 359.89 Z" fill="none" stroke="#111" stroke-width="2.4" shape-rendering="auto"/>
<path d="M694.98 263.73 L695.18 262.23 L695.64 260.86 L696.34 259.69 L697.27 258.75 L698.37 258.09 L699.62 257.72 L700.97 257.67 L702.36 257.94 L801.14 288.02 L802.73 288.68 L804.23 289.63 L805.57 290.85 L806.71 292.29 L807.60 293.89 L808.20 295.59 L808.50 297.32 L808.47 299.01 L797.03 401.02 L796.72 402.41 L796.13 403.62 L795.28 404.61 L794.21 405.35 L792.95 405.81 L791.56 405.97 L790.09 405.82 L788.60 405.38 L697.31 369.44 L696.03 368.81 L694.82 367.92 L693.71 366.84 L692.75 365.58 L691.99 364.21 L691.43 362.76 L691.11 361.31 L691.04 359.89 Z" fill="none" stroke="#c8c8c8" stroke-width="0.8" stroke-dasharray="2 1.2" shape-rendering="auto"/>
<path d="M791.56 370.11 L791.87 369.37 L792.55 368.99 L793.42 369.08 L794.24 369.61 L794.79 370.44 L794.93 371.35 L794.61 372.09 L793.93 372.47 L793.07 372.38 L792.25 371.85 L791.70 371.02 Z" fill="#e8e8e8" stroke="#000" stroke-width="0.9"/>
<path d="M796.20 326.53 L796.52 325.73 L797.23 325.30 L798.12 325.35 L798.97 325.88 L799.53 326.73 L799.67 327.69 L799.34 328.48 L798.64 328.91 L797.74 328.85 L796.90 328.33 L796.34 327.48 Z" fill="#e8e8e8" stroke="#000" stroke-width="0.9"/>
<path d="M696.58 335.26 L696.81 334.55 L697.37 334.17 L698.10 334.22 L698.82 334.70 L699.33 335.47 L699.49 336.33 L699.26 337.05 L698.70 337.43 L697.96 337.37 L697.24 336.89 L696.74 336.12 Z" fill="#e8e8e8" stroke="#000" stroke-width="0.9"/>
<path d="M698.39 293.88 L698.63 293.11 L699.20 292.69 L699.96 292.72 L700.70 293.19 L701.22 293.98 L701.39 294.88 L701.15 295.64 L700.57 296.06 L699.81 296.03 L699.08 295.56 L698.56 294.77 Z" fill="#e8e8e8" stroke="#000" stroke-width="0.9"/>
<path d="M760.23 387.62 L760.51 386.91 L761.14 386.56 L761.95 386.66 L762.72 387.18 L763.25 387.98 L763.39 388.85 L763.11 389.55 L762.48 389.90 L761.67 389.80 L760.90 389.28 L760.37 388.48 Z" fill="#e8e8e8" stroke="#000" stroke-width="0.9"/>
<path d="M720.97 372.36 L721.22 371.66 L721.80 371.31 L722.55 371.39 L723.29 371.89 L723.80 372.67 L723.95 373.51 L723.70 374.21 L723.12 374.56 L722.36 374.47 L721.63 373.98 L721.12 373.20 Z" fill="#e8e8e8" stroke="#000" stroke-width="0.9"/>
<path d="M769.10 285.78 L769.40 284.96 L770.08 284.49 L770.95 284.51 L771.78 285.02 L772.34 285.87 L772.49 286.83 L772.18 287.66 L771.50 288.12 L770.63 288.09 L769.81 287.59 L769.24 286.74 Z" fill="#e8e8e8" stroke="#000" stroke-width="0.9"/>
<path d="M727.02 272.73 L727.29 271.92 L727.91 271.46 L728.72 271.47 L729.50 271.96 L730.05 272.78 L730.21 273.72 L729.94 274.53 L729.31 274.98 L728.50 274.97 L727.72 274.49 L727.18 273.67 Z" fill="#e8e8e8" stroke="#000" stroke-width="0.9"/>
<path d="M802.13 417.33 L868.57 358.37 L887.35 237.27 L817.54 285.32 Z M873.55 273.00 L873.74 271.20 L873.74 269.59 L873.55 268.25 L873.18 267.21 L872.63 266.53 L871.94 266.24 L871.11 266.33 L870.20 266.83 L832.19 294.23 L831.08 295.21 L829.96 296.55 L828.88 298.20 L827.87 300.10 L826.98 302.17 L826.24 304.32 L825.68 306.48 L825.33 308.55 L816.50 380.12 L816.38 381.84 L816.48 383.32 L816.78 384.50 L817.28 385.32 L817.96 385.76 L818.78 385.81 L819.73 385.47 L820.75 384.75 L857.47 353.15 L858.41 352.20 L859.36 350.95 L860.29 349.45 L861.16 347.75 L861.93 345.93 L862.59 344.05 L863.10 342.18 L863.44 340.38 Z" fill-rule="evenodd" fill="#ababab" stroke="#000" stroke-width="1"/>
<path d="M881.89 254.05 L882.05 252.59 L882.06 251.29 L881.92 250.19 L881.64 249.33 L881.22 248.76 L880.68 248.50 L880.04 248.55 L879.32 248.91 L825.38 286.67 L824.46 287.46 L823.54 288.54 L822.64 289.89 L821.81 291.43 L821.08 293.12 L820.48 294.88 L820.03 296.65 L819.74 298.36 L807.61 400.26 L807.52 401.62 L807.61 402.78 L807.87 403.70 L808.29 404.33 L808.85 404.65 L809.52 404.66 L810.30 404.35 L811.13 403.74 L862.76 358.41 L863.49 357.66 L864.23 356.67 L864.95 355.49 L865.63 354.15 L866.24 352.72 L866.75 351.25 L867.15 349.78 L867.43 348.38 Z" fill="none" stroke="#111" stroke-width="2.4" shape-rendering="auto"/>
<path d="M881.89 254.05 L882.05 252.59 L882.06 251.29 L881.92 250.19 L881.64 249.33 L881.22 248.76 L880.68 248.50 L880.04 248.55 L879.32 248.91 L825.38 286.67 L824.46 287.46 L823.54 288.54 L822.64 289.89 L821.81 291.43 L821.08 293.12 L820.48 294.88 L820.03 296.65 L819.74 298.36 L807.61 400.26 L807.52 401.62 L807.61 402.78 L807.87 403.70 L808.29 404.33 L808.85 404.65 L809.52 404.66 L810.30 404.35 L811.13 403.74 L862.76 358.41 L863.49 357.66 L864.23 356.67 L864.95 355.49 L865.63 354.15 L866.24 352.72 L866.75 351.25 L867.15 349.78 L867.43 348.38 Z" fill="none" stroke="#c8c8c8" stroke-width="0.8" stroke-dasharray="2 1.2" shape-rendering="auto"/>
<path d="M815.82 368.47 L815.80 367.75 L815.52 367.44 L815.06 367.61 L814.55 368.23 L814.13 369.13 L813.90 370.06 L813.93 370.78 L814.21 371.09 L814.66 370.92 L815.17 370.30 L815.59 369.40 Z" fill="#e8e8e8" stroke="#000" stroke-width="0.9"/>
<path d="M821.13 324.99 L821.10 324.22 L820.82 323.85 L820.36 323.99 L819.84 324.60 L819.40 325.51 L819.16 326.48 L819.19 327.26 L819.47 327.62 L819.93 327.48 L820.45 326.87 L820.89 325.96 Z" fill="#e8e8e8" stroke="#000" stroke-width="0.9"/>
<path d="M868.95 324.60 L868.96 323.92 L868.75 323.59 L868.38 323.71 L867.95 324.25 L867.57 325.06 L867.35 325.92 L867.34 326.60 L867.55 326.93 L867.91 326.80 L868.34 326.27 L868.72 325.46 Z" fill="#e8e8e8" stroke="#000" stroke-width="0.9"/>
<path d="M875.12 283.97 L875.14 283.24 L874.93 282.87 L874.56 282.96 L874.12 283.48 L873.73 284.31 L873.50 285.20 L873.49 285.93 L873.69 286.30 L874.07 286.21 L874.50 285.69 L874.89 284.87 Z" fill="#e8e8e8" stroke="#000" stroke-width="0.9"/>
<path d="M828.55 382.84 L828.53 382.17 L828.28 381.88 L827.86 382.06 L827.38 382.66 L826.97 383.52 L826.75 384.41 L826.77 385.08 L827.02 385.37 L827.45 385.19 L827.92 384.59 L828.33 383.73 Z" fill="#e8e8e8" stroke="#000" stroke-width="0.9"/>
<path d="M850.68 363.63 L850.68 362.96 L850.45 362.67 L850.06 362.82 L849.62 363.39 L849.23 364.21 L849.01 365.07 L849.01 365.74 L849.24 366.03 L849.63 365.87 L850.07 365.30 L850.46 364.48 Z" fill="#e8e8e8" stroke="#000" stroke-width="0.9"/>
<path d="M841.83 281.75 L841.82 280.95 L841.57 280.54 L841.13 280.63 L840.63 281.21 L840.20 282.10 L839.96 283.08 L839.97 283.88 L840.23 284.28 L840.66 284.19 L841.16 283.61 L841.59 282.72 Z" fill="#e8e8e8" stroke="#000" stroke-width="0.9"/>
<path d="M864.83 265.39 L864.83 264.61 L864.61 264.20 L864.21 264.28 L863.75 264.82 L863.34 265.67 L863.10 266.62 L863.09 267.39 L863.32 267.80 L863.72 267.72 L864.18 267.18 L864.59 266.33 Z" fill="#e8e8e8" stroke="#000" stroke-width="0.9"/>
<path d="M817.54 285.32 L887.35 237.27 L767.38 207.07 L689.52 247.04 Z M782.25 219.07 L780.46 218.69 L778.55 218.43 L776.57 218.32 L774.61 218.33 L772.73 218.49 L771.01 218.78 L769.52 219.19 L768.30 219.71 L726.10 242.24 L725.07 242.92 L724.42 243.69 L724.17 244.50 L724.34 245.32 L724.92 246.13 L725.90 246.88 L727.23 247.57 L728.86 248.14 L798.49 268.39 L800.56 268.89 L802.78 269.22 L805.06 269.38 L807.31 269.35 L809.44 269.14 L811.37 268.76 L813.02 268.22 L814.33 267.55 L853.44 241.94 L854.22 241.25 L854.60 240.50 L854.57 239.71 L854.12 238.91 L853.27 238.14 L852.07 237.41 L850.56 236.77 L848.79 236.23 Z" fill-rule="evenodd" fill="#b6b6b6" stroke="#000" stroke-width="1"/>
<path d="M776.23 212.10 L774.84 211.81 L773.34 211.61 L771.79 211.52 L770.25 211.53 L768.77 211.66 L767.43 211.88 L766.25 212.19 L765.29 212.59 L705.20 243.86 L704.34 244.41 L703.79 245.03 L703.55 245.68 L703.65 246.34 L704.08 246.99 L704.83 247.60 L705.86 248.15 L707.15 248.61 L806.07 277.90 L807.77 278.32 L809.59 278.60 L811.46 278.73 L813.31 278.71 L815.05 278.53 L816.63 278.21 L817.97 277.76 L819.04 277.19 L873.53 240.33 L874.13 239.79 L874.40 239.19 L874.34 238.57 L873.94 237.93 L873.24 237.32 L872.25 236.74 L871.01 236.23 L869.57 235.80 Z" fill="none" stroke="#111" stroke-width="2.4" shape-rendering="auto"/>
<path d="M776.23 212.10 L774.84 211.81 L773.34 211.61 L771.79 211.52 L770.25 211.53 L768.77 211.66 L767.43 211.88 L766.25 212.19 L765.29 212.59 L705.20 243.86 L704.34 244.41 L703.79 245.03 L703.55 245.68 L703.65 246.34 L704.08 246.99 L704.83 247.60 L705.86 248.15 L707.15 248.61 L806.07 277.90 L807.77 278.32 L809.59 278.60 L811.46 278.73 L813.31 278.71 L815.05 278.53 L816.63 278.21 L817.97 277.76 L819.04 277.19 L873.53 240.33 L874.13 239.79 L874.40 239.19 L874.34 238.57 L873.94 237.93 L873.24 237.32 L872.25 236.74 L871.01 236.23 L869.57 235.80 Z" fill="none" stroke="#c8c8c8" stroke-width="0.8" stroke-dasharray="2 1.2" shape-rendering="auto"/>
<path d="M781.65 265.81 L780.66 265.64 L779.66 265.70 L778.91 265.95 L778.61 266.34 L778.85 266.76 L779.56 267.10 L780.56 267.26 L781.56 267.21 L782.31 266.95 L782.60 266.56 L782.36 266.14 Z" fill="#e8e8e8" stroke="#000" stroke-width="0.9"/>
<path d="M739.38 253.44 L738.44 253.29 L737.46 253.34 L736.71 253.58 L736.38 253.94 L736.57 254.33 L737.23 254.65 L738.17 254.80 L739.15 254.75 L739.90 254.51 L740.23 254.15 L740.04 253.76 Z" fill="#e8e8e8" stroke="#000" stroke-width="0.9"/>
<path d="M839.03 230.33 L838.11 230.20 L837.21 230.24 L836.56 230.45 L836.34 230.77 L836.62 231.12 L837.31 231.40 L838.23 231.53 L839.14 231.49 L839.79 231.28 L840.00 230.96 L839.72 230.61 Z" fill="#e8e8e8" stroke="#000" stroke-width="0.9"/>
<path d="M798.87 220.07 L797.99 219.95 L797.10 219.99 L796.45 220.18 L796.21 220.49 L796.44 220.81 L797.08 221.08 L797.96 221.20 L798.85 221.16 L799.50 220.96 L799.74 220.66 L799.51 220.33 Z" fill="#e8e8e8" stroke="#000" stroke-width="0.9"/>
<path d="M829.45 263.29 L828.45 263.13 L827.46 263.18 L826.75 263.43 L826.50 263.81 L826.79 264.23 L827.54 264.56 L828.55 264.72 L829.54 264.67 L830.25 264.42 L830.49 264.03 L830.20 263.62 Z" fill="#e8e8e8" stroke="#000" stroke-width="0.9"/>
<path d="M852.92 247.69 L851.95 247.54 L851.00 247.59 L850.33 247.82 L850.12 248.18 L850.42 248.56 L851.16 248.86 L852.13 249.01 L853.08 248.96 L853.75 248.73 L853.96 248.38 L853.65 248.00 Z" fill="#e8e8e8" stroke="#000" stroke-width="0.9"/>
<path d="M730.63 235.54 L729.73 235.40 L728.80 235.45 L728.08 235.66 L727.76 235.99 L727.93 236.35 L728.55 236.64 L729.44 236.78 L730.38 236.73 L731.10 236.51 L731.42 236.18 L731.24 235.83 Z" fill="#e8e8e8" stroke="#000" stroke-width="0.9"/>
<path d="M756.21 222.05 L755.34 221.92 L754.44 221.96 L753.76 222.16 L753.48 222.47 L753.67 222.80 L754.28 223.06 L755.15 223.19 L756.05 223.15 L756.73 222.95 L757.01 222.64 L756.82 222.31 Z" fill="#e8e8e8" stroke="#000" stroke-width="0.9"/>
<polygon points="909.8,313.5 971.5,258.3 974.0,267.5 917.4,319.0" fill="#fdc8e2" stroke="#000" stroke-width="1" stroke-linejoin="round" />
<polygon points="909.8,313.5 917.4,319.0 893.5,443.4 884.0,450.0" fill="#fed6ee" stroke="#000" stroke-width="1" stroke-linejoin="round" />
<polygon points="917.4,319.0 974.0,267.5 947.2,384.0 893.5,443.4" fill="#d3a4b9" stroke="#000" stroke-width="1" stroke-linejoin="round" />
<defs><linearGradient id="pkw" gradientUnits="userSpaceOnUse" x1="945" y1="312" x2="925" y2="395"><stop offset="0" stop-color="#a87890"/><stop offset="0.35" stop-color="#e8b8d0"/><stop offset="1" stop-color="#fcd8ea"/></linearGradient><clipPath id="pkh"><ellipse cx="934.5" cy="355.2" rx="11.4" ry="42.8" transform="rotate(20 934.5 355.2)"/></clipPath></defs>
<ellipse cx="934.5" cy="355.2" rx="11.4" ry="42.8" transform="rotate(20 934.5 355.2)" fill="url(#pkw)"/>
<g clip-path="url(#pkh)"><ellipse cx="929.2" cy="357.2" rx="11.4" ry="42.8" transform="rotate(20 929.2 357.2)" fill="#fff" stroke="#000" stroke-width="0.9"/></g>
<ellipse cx="934.5" cy="355.2" rx="11.4" ry="42.8" transform="rotate(20 934.5 355.2)" fill="none" stroke="#000" stroke-width="1"/>
<circle cx="935" cy="310.7" r="1.25" fill="#222" shape-rendering="auto"/>
<circle cx="943" cy="312.9" r="1.25" fill="#222" shape-rendering="auto"/>
<circle cx="953.2" cy="313.6" r="1.25" fill="#222" shape-rendering="auto"/>
<circle cx="961.8" cy="309.3" r="1.25" fill="#222" shape-rendering="auto"/>
<circle cx="951.5" cy="337.2" r="1.25" fill="#222" shape-rendering="auto"/>
<circle cx="927.2" cy="339.4" r="1.25" fill="#222" shape-rendering="auto"/>
<circle cx="913.6" cy="357.3" r="1.25" fill="#222" shape-rendering="auto"/>
<circle cx="950.8" cy="354.4" r="1.25" fill="#222" shape-rendering="auto"/>
<circle cx="940.8" cy="370.1" r="1.25" fill="#222" shape-rendering="auto"/>
<circle cx="915" cy="375.2" r="1.25" fill="#222" shape-rendering="auto"/>
<circle cx="925.8" cy="394.5" r="1.25" fill="#222" shape-rendering="auto"/>
<circle cx="933.2" cy="393.8" r="1.25" fill="#222" shape-rendering="auto"/>
<circle cx="914.3" cy="398" r="1.25" fill="#222" shape-rendering="auto"/>
<circle cx="904.3" cy="404.5" r="1.25" fill="#222" shape-rendering="auto"/>
<polygon points="631.6,276.4 764.5,322.2 754.6,328.5 631.8,286.4" fill="#dcfcdc" stroke="#000" stroke-width="1" stroke-linejoin="round" />
<polygon points="754.6,328.5 764.5,322.2 755.5,461.4 747.2,456.7" fill="#dcfcdc" stroke="#000" stroke-width="1" stroke-linejoin="round" />
<polygon points="631.8,286.4 754.6,328.5 747.2,456.7 636.0,406.0" fill="#bde9bb" stroke="#000" stroke-width="1" stroke-linejoin="round" />
<ellipse cx="667.4" cy="307.8" rx="1.5" ry="1.8" fill="none" stroke="#000" stroke-width="0.8"/>
<ellipse cx="641.4" cy="328.6" rx="1.5" ry="1.8" fill="none" stroke="#000" stroke-width="0.8"/>
<ellipse cx="713.2" cy="324.7" rx="1.5" ry="1.8" fill="none" stroke="#000" stroke-width="0.8"/>
<ellipse cx="743" cy="369" rx="1.5" ry="1.8" fill="none" stroke="#000" stroke-width="0.8"/>
<ellipse cx="740.3" cy="416.4" rx="1.5" ry="1.8" fill="none" stroke="#000" stroke-width="0.8"/>
<ellipse cx="710.4" cy="432" rx="1.5" ry="1.8" fill="none" stroke="#000" stroke-width="0.8"/>
<ellipse cx="643" cy="375" rx="1.5" ry="1.8" fill="none" stroke="#000" stroke-width="0.8"/>
<ellipse cx="668" cy="412.7" rx="1.5" ry="1.8" fill="none" stroke="#000" stroke-width="0.8"/>
<g opacity="0.8">
<polygon points="558.3,313.5 696.0,369.3 685.4,376.6 558.8,325.0" fill="#4b8287" stroke="none" stroke-width="1" stroke-linejoin="round" />
<polygon points="685.4,376.6 696.0,369.3 695.5,515.5 685.1,511.4" fill="#4a8085" stroke="none" stroke-width="1" stroke-linejoin="round" />
<polygon points="558.8,325.0 685.4,376.6 685.1,511.4 571.5,450.4" fill="#477e83" stroke="none" stroke-width="1" stroke-linejoin="round" />
</g>
<path d="M558.3 313.5 L696.0 369.3 L695.5 515.5 L685.1 511.4 L571.5 450.4 L558.8 325.0 Z" fill="none" stroke="#000" stroke-width="1" />
<path d="M558.8 325.0 L685.4 376.6 L685.1 511.4" fill="none" stroke="#000" stroke-width="1" />
<path d="M685.4 376.6 L696.0 369.3" fill="none" stroke="#000" stroke-width="1" />
<path d="M636 345 L636 406 L696 433.7" fill="none" stroke="#1d4a4a" stroke-width="0.9" />
<path d="M595.3 349.5 L599.6999999999999 346.29999999999995" stroke="#333" stroke-width="3.2" stroke-linecap="round" shape-rendering="auto"/><path d="M595.5 349.09999999999997 L599.5 346.29999999999995" stroke="#b4b8b8" stroke-width="1.8" stroke-linecap="round" shape-rendering="auto"/><ellipse cx="595.0" cy="349.9" rx="1.5" ry="1.3" fill="#9aa" stroke="#000" stroke-width="1" shape-rendering="auto"/>
<path d="M570.6999999999999 370.5 L575.0999999999999 367.29999999999995" stroke="#333" stroke-width="3.2" stroke-linecap="round" shape-rendering="auto"/><path d="M570.9 370.09999999999997 L574.9 367.29999999999995" stroke="#b4b8b8" stroke-width="1.8" stroke-linecap="round" shape-rendering="auto"/><ellipse cx="570.4" cy="370.9" rx="1.5" ry="1.3" fill="#9aa" stroke="#000" stroke-width="1" shape-rendering="auto"/>
<path d="M643.1999999999999 369.0 L647.5999999999999 365.79999999999995" stroke="#333" stroke-width="3.2" stroke-linecap="round" shape-rendering="auto"/><path d="M643.4 368.59999999999997 L647.4 365.79999999999995" stroke="#b4b8b8" stroke-width="1.8" stroke-linecap="round" shape-rendering="auto"/><ellipse cx="642.9" cy="369.4" rx="1.5" ry="1.3" fill="#9aa" stroke="#000" stroke-width="1" shape-rendering="auto"/>
<path d="M676.1999999999999 416.90000000000003 L680.5999999999999 413.7" stroke="#333" stroke-width="3.2" stroke-linecap="round" shape-rendering="auto"/><path d="M676.4 416.5 L680.4 413.7" stroke="#b4b8b8" stroke-width="1.8" stroke-linecap="round" shape-rendering="auto"/><ellipse cx="675.9" cy="417.3" rx="1.5" ry="1.3" fill="#9aa" stroke="#000" stroke-width="1" shape-rendering="auto"/>
<path d="M676.1999999999999 467.8 L680.5999999999999 464.59999999999997" stroke="#333" stroke-width="3.2" stroke-linecap="round" shape-rendering="auto"/><path d="M676.4 467.4 L680.4 464.59999999999997" stroke="#b4b8b8" stroke-width="1.8" stroke-linecap="round" shape-rendering="auto"/><ellipse cx="675.9" cy="468.2" rx="1.5" ry="1.3" fill="#9aa" stroke="#000" stroke-width="1" shape-rendering="auto"/>
<path d="M646.8 482.20000000000005 L651.1999999999999 479.0" stroke="#333" stroke-width="3.2" stroke-linecap="round" shape-rendering="auto"/><path d="M647.0 481.8 L651.0 479.0" stroke="#b4b8b8" stroke-width="1.8" stroke-linecap="round" shape-rendering="auto"/><ellipse cx="646.5" cy="482.6" rx="1.5" ry="1.3" fill="#9aa" stroke="#000" stroke-width="1" shape-rendering="auto"/>
<polygon points="468.4,359.3 610.7,428.9 599.3,436.4 468.7,371.4" fill="#fffde0" stroke="#000" stroke-width="1" stroke-linejoin="round" />
<polygon points="599.3,436.4 610.7,428.9 621.4,582.3 610.0,578.2" fill="#fffde0" stroke="#000" stroke-width="1" stroke-linejoin="round" />
<polygon points="468.7,371.4 599.3,436.4 610.0,578.2 493.7,504.6" fill="#ecdfbd" stroke="#000" stroke-width="1" stroke-linejoin="round" />
<defs><clipPath id="crh"><ellipse cx="540.2" cy="475.3" rx="13.7" ry="23.9" transform="rotate(-34.9 540.2 475.3)"/></clipPath><linearGradient id="crw" x1="0" y1="0" x2="1" y2="1"><stop offset="0" stop-color="#a89e80"/><stop offset="0.5" stop-color="#fff8d8"/><stop offset="1" stop-color="#b8ae90"/></linearGradient></defs>
<ellipse cx="540.2" cy="475.3" rx="13.7" ry="23.9" transform="rotate(-34.9 540.2 475.3)" fill="url(#crw)"/>
<g clip-path="url(#crh)"><ellipse cx="545.6" cy="471.8" rx="13.7" ry="23.9" transform="rotate(-34.9 545.6 471.8)" fill="#fff" stroke="#000" stroke-width="0.9"/></g>
<ellipse cx="540.2" cy="475.3" rx="13.7" ry="23.9" transform="rotate(-34.9 540.2 475.3)" fill="none" stroke="#000" stroke-width="1"/>
<ellipse cx="506.6" cy="400" rx="1.6" ry="2" transform="rotate(-30 506.6 400)" fill="none" stroke="#000" stroke-width="0.9"/>
<ellipse cx="484.7" cy="420.3" rx="1.6" ry="2" transform="rotate(-30 484.7 420.3)" fill="none" stroke="#000" stroke-width="0.9"/>
<ellipse cx="556" cy="425" rx="1.6" ry="2" transform="rotate(-30 556 425)" fill="none" stroke="#000" stroke-width="0.9"/>
<ellipse cx="494" cy="470.3" rx="1.6" ry="2" transform="rotate(-30 494 470.3)" fill="none" stroke="#000" stroke-width="0.9"/>
<ellipse cx="592.5" cy="478.75" rx="1.6" ry="2" transform="rotate(-30 592.5 478.75)" fill="none" stroke="#000" stroke-width="0.9"/>
<ellipse cx="525.3" cy="517.2" rx="1.6" ry="2" transform="rotate(-30 525.3 517.2)" fill="none" stroke="#000" stroke-width="0.9"/>
<ellipse cx="597.2" cy="532.8" rx="1.6" ry="2" transform="rotate(-30 597.2 532.8)" fill="none" stroke="#000" stroke-width="0.9"/>
<ellipse cx="570" cy="545.3" rx="1.6" ry="2" transform="rotate(-30 570 545.3)" fill="none" stroke="#000" stroke-width="0.9"/>
</svg>
<svg class="a" style="left:0;top:700px" width="1366" height="68" viewBox="0 700 1366 68">
<defs>
<radialGradient id="orb" cx="0.5" cy="0.35" r="0.65"><stop offset="0" stop-color="#7ab8d8"/><stop offset="0.45" stop-color="#2a78a8"/><stop offset="0.8" stop-color="#0c4878"/><stop offset="1" stop-color="#1aa0e0"/></radialGradient>
<linearGradient id="btn" x1="0" y1="0" x2="1" y2="1"><stop offset="0" stop-color="#8aa6ae"/><stop offset="0.45" stop-color="#4e727c"/><stop offset="1" stop-color="#2c5662"/></linearGradient>
<linearGradient id="btnA" x1="0" y1="0" x2="1" y2="1"><stop offset="0" stop-color="#c8d6da"/><stop offset="0.45" stop-color="#98aeb4"/><stop offset="1" stop-color="#7c969e"/></linearGradient>
<radialGradient id="helpg" cx="0.5" cy="0.3" r="0.7"><stop offset="0" stop-color="#4a7ac8"/><stop offset="0.6" stop-color="#163c88"/><stop offset="1" stop-color="#0a2050"/></radialGradient>
</defs>
<!-- status icons -->
<circle cx="13" cy="713.8" r="9" fill="#fff" stroke="#8c8c8c" stroke-width="1.7"/>
<path d="M13 720 L11.4 713 A 3 3 0 1 1 14.6 713 Z" fill="#8a8a8a"/>
<circle cx="42.8" cy="713.8" r="9" fill="#fff" stroke="#000" stroke-width="2"/>
<circle cx="42.8" cy="709" r="1.3" fill="#000"/><rect x="41.2" y="710.5" width="3.2" height="9.5" rx="0.8" fill="#000"/>
<circle cx="72.8" cy="713.8" r="9" fill="#fff" stroke="#8c8c8c" stroke-width="1.7"/>
<circle cx="72.8" cy="711" r="3" fill="#8e8e8e"/><path d="M67.4 721 L67.4 718 C 67.4 716 68.6 715.4 70.4 715.4 L 75.2 715.4 C 77 715.4 78.2 716 78.2 718 L 78.2 721 C 76 722.6 69.6 722.6 67.4 721Z" fill="#8e8e8e"/>
<line x1="92.3" y1="710.5" x2="92.3" y2="718.6" stroke="#777" stroke-width="0.9"/>
<circle cx="107" cy="713.8" r="8.8" fill="#1e5ba6" stroke="#000" stroke-width="1.4"/>
<text x="107" y="718.4" text-anchor="middle" font-family="Liberation Sans" font-weight="bold" font-size="12" fill="#fff">?</text>
<!-- measurement box -->
<line x1="1055.5" y1="710" x2="1055.5" y2="719" stroke="#777" stroke-width="0.9"/>
<rect x="1161.5" y="703.5" width="199" height="23" fill="#f0f0f0" stroke="#a8b8d0" stroke-width="1"/>
<!-- taskbar -->
<line x1="0" y1="728.5" x2="1366" y2="728.5" stroke="#0a2028" stroke-width="1"/>
<line x1="0" y1="729.5" x2="1366" y2="729.5" stroke="#6a909a" stroke-width="1" opacity="0.7"/>
<!-- start orb -->
<circle cx="26.9" cy="748" r="18" fill="url(#orb)" stroke="#4a7890" stroke-width="0.8"/>
<ellipse cx="26.9" cy="740" rx="13" ry="7" fill="#fff" opacity="0.25"/>
<path d="M18 741 C 20 739.5 22.5 739.5 26 740.5 L 25 746.5 C 22 745.5 20 745.5 17 746.8 Z" fill="#f05a20"/>
<path d="M27 740.8 C 30 741.5 33 741.5 36 740 L 35 746 C 32 747.5 29.5 747.5 26.2 746.8 Z" fill="#80c040"/>
<path d="M16.8 747.6 C 19.8 746.4 22 746.4 25 747.4 L 24 753.4 C 21 752.4 19 752.4 15.6 753.6 Z" fill="#2aa0e8"/>
<path d="M26 747.7 C 29.4 748.4 31.8 748.4 35 747 L 34 753 C 31 754.4 28.6 754.4 25 753.6 Z" fill="#f8c020"/>
<!-- grip -->
<g fill="#06141a">
<rect x="58.4" y="733.5" width="1.6" height="1.6"/><rect x="61.4" y="733.5" width="1.6" height="1.6"/><rect x="64.4" y="733.5" width="1.6" height="1.6"/>
<rect x="58.4" y="737.5" width="1.6" height="1.6"/><rect x="61.4" y="737.5" width="1.6" height="1.6"/><rect x="64.4" y="737.5" width="1.6" height="1.6"/>
<rect x="58.4" y="741.5" width="1.6" height="1.6"/><rect x="61.4" y="741.5" width="1.6" height="1.6"/><rect x="64.4" y="741.5" width="1.6" height="1.6"/>
<rect x="58.4" y="745.5" width="1.6" height="1.6"/><rect x="61.4" y="745.5" width="1.6" height="1.6"/><rect x="64.4" y="745.5" width="1.6" height="1.6"/>
<rect x="58.4" y="749.5" width="1.6" height="1.6"/><rect x="61.4" y="749.5" width="1.6" height="1.6"/><rect x="64.4" y="749.5" width="1.6" height="1.6"/>
<rect x="58.4" y="753.5" width="1.6" height="1.6"/><rect x="61.4" y="753.5" width="1.6" height="1.6"/><rect x="64.4" y="753.5" width="1.6" height="1.6"/>
<rect x="58.4" y="757.5" width="1.6" height="1.6"/><rect x="61.4" y="757.5" width="1.6" height="1.6"/><rect x="64.4" y="757.5" width="1.6" height="1.6"/>
<rect x="58.4" y="761" width="1.6" height="1.6"/><rect x="61.4" y="761" width="1.6" height="1.6"/><rect x="64.4" y="761" width="1.6" height="1.6"/>
</g>
<!-- buttons -->
<rect x="76.5" y="729.5" width="57" height="37" rx="3" fill="url(#btn)" stroke="#9ab4ba" stroke-width="1" opacity="0.85"/>
<rect x="386" y="729.5" width="53" height="37" rx="3" fill="url(#btn)" stroke="#9ab4ba" stroke-width="1" opacity="0.85"/>
<rect x="439.5" y="730.5" width="4" height="35" fill="#2e5660" stroke="#7a9aa2" stroke-width="0.8"/>
<rect x="448" y="729.5" width="58" height="37" rx="3" fill="url(#btnA)" stroke="#d0dee2" stroke-width="1"/>
<rect x="510.5" y="729.5" width="57.5" height="37" rx="3" fill="url(#btn)" stroke="#9ab4ba" stroke-width="1" opacity="0.85"/>
<!-- chrome -->
<g transform="translate(105 748)">
<path d="M0 0 L -14.0 -5.1 A 14.9 14.9 0 0 1 14.0 -5.1 Z" fill="#db4437"/>
<path d="M0 0 L 14.0 -5.1 A 14.9 14.9 0 0 1 -2.6 14.7 Z" fill="#f4c20d"/>
<path d="M0 0 L -2.6 14.7 A 14.9 14.9 0 0 1 -14.0 -5.1 Z" fill="#0f9d58"/>
<path d="M0 -6.4 L 13.2 -6.4 L 14.5 -3.5 Z" fill="#f4c20d"/>
<path d="M-5.5 3.2 L -12.3 -8.4 L -14.4 -4 Z" fill="#0f9d58"/>
<path d="M5.5 3.2 L -1 14.8 L 2.6 14.7 Z" fill="#f4c20d"/>
<circle r="6.6" fill="#fff"/><circle r="5.2" fill="#4285f4"/>
</g>
<!-- firefox -->
<g transform="translate(166.8 748)">
<circle r="15" fill="#e8601c"/>
<circle cx="1.6" cy="-2" r="11" fill="#1e4d9a"/>
<circle cx="3" cy="-4" r="6" fill="#3a78d0"/>
<path d="M -14 -3 C -12 -12 -4 -15 2 -14 C -4 -12 -8 -8 -6 -4 C -3 0 4 -1 8 2 C 4 8 -4 12 -10 8 C -14 5 -15 1 -14 -3 Z" fill="#f07820"/>
<path d="M 8 -12 C 14 -8 15 0 12 6 C 9 12 3 15 -2 15 C 6 12 11 6 10 -2 Z" fill="#f8a828"/>
</g>
<!-- IE -->
<g transform="translate(228.8 747.5)">
<path d="M 11.5 1.8 L -7 1.8 C -6.5 6.5 -2 9 2.5 8.5 C 5.5 8.2 7.5 7 9 5 L 11 8.5 C 8.5 11.5 5 12.8 1 12.8 C -7.5 12.8 -12.5 6.5 -12.5 -0.5 C -12.5 -8 -6.5 -13 0.5 -13 C 7.5 -13 12 -8 12 -1 Z M -6.8 -2.6 L 6.8 -2.6 C 6.3 -6.5 3.5 -8.8 0 -8.8 C -3.5 -8.8 -6.3 -6.5 -6.8 -2.6 Z" fill="#3fb6ee" stroke="#1a7ab8" stroke-width="0.6"/>
<path d="M -13 9.5 C -18 16 -9 15 2 7 C 12 0 18 -9 15 -12.5 C 13 -14.5 7 -12.5 2 -10" fill="none" stroke="#f0c010" stroke-width="2.2"/>
</g>
<!-- folder -->
<path d="M275 738 L 289 738 L 291 736 L 306 736 L 307 763 L 275 763 Z" fill="#e8d890" stroke="#b89840" stroke-width="0.8"/>
<rect x="278" y="735.5" width="4" height="2" fill="#20b040"/><rect x="286" y="737" width="3" height="2" fill="#d03020"/><rect x="294" y="739" width="4" height="2" fill="#2080e0"/>
<path d="M275 744 L 307 742 L 307 763 L 275 763 Z" fill="#f8e6a0"/>
<path d="M279.5 752 L 299 752 L 299 764 L 296 764 L 296 756 L 283 756 L 283 764 L 279.5 764 Z" fill="#80c8f0" stroke="#4090c0" stroke-width="0.6"/>
<!-- wmp -->
<rect x="342" y="736.5" width="23" height="25.5" fill="#b8d8f0" stroke="#6898c0" stroke-width="0.6"/>
<rect x="338.6" y="737" width="22" height="24.5" fill="#90c0e8" stroke="#5888b8" stroke-width="0.6"/>
<circle cx="349.6" cy="749" r="9" fill="#f08020" stroke="#fff" stroke-width="0.6"/>
<path d="M346.5 744 L 355 749 L 346.5 754 Z" fill="#fff"/>
<!-- maker -->
<rect x="396.1" y="731.9" width="32" height="32" rx="5" fill="#f51e14"/>
<circle cx="411.9" cy="748" r="10.8" fill="none" stroke="#fff" stroke-width="1.4"/>
<path d="M406.4 754 L 406.4 744 C 406.4 742 408 741.4 409.2 742 L 409.2 754 M 409.2 743 C 410.4 741.4 412 741.4 413 743 L 413 754 M 413 743 C 414.2 741.4 417.4 741.4 417.4 744 L 417.4 754" fill="none" stroke="#fff" stroke-width="2.2"/>
<!-- sketchup -->
<path d="M464.2 739 L 478 734 L 489.8 740.5 L 488 753.5 L 470 761.9 L 465.5 753 Z" fill="#e8202a"/>
<path d="M478 750 L 489.8 740.5 L 488 753.5 L 470 761.9 Z" fill="#c01820"/>
<path d="M467 739.8 L 477.5 736.5 L 486 740.5 L 480.5 743 L 478 742 L 470 744.5 Z" fill="#fff"/>
<path d="M470 746 L 478 743.5 L 481 745 L 472 748 Z M 472.5 751.5 L 476 750.5 L 477 752 L 473.5 753.2 Z" fill="#fff"/>
<!-- word -->
<path d="M524.2 736 L 541 732.6 L 541 762.6 L 524.2 759 Z" fill="#2b579a"/>
<rect x="540" y="737" width="13.5" height="21" fill="#fff" stroke="#2b579a" stroke-width="0.8"/>
<path d="M542 740 L 551.5 740 M542 743 L 551.5 743 M542 746 L 551.5 746 M542 749 L 551.5 749 M542 752 L 551.5 752 M542 755 L 551.5 755" stroke="#2b579a" stroke-width="1"/>
<text x="526" y="752.5" font-family="Liberation Sans" font-weight="bold" font-size="10.5" fill="#fff">W</text>
<!-- tray -->
<circle cx="1134" cy="748" r="15.4" fill="url(#helpg)" stroke="#1a5cb0" stroke-width="1.2"/>
<path d="M1121 746 C 1124 738 1144 738 1147 746 C 1140 744 1128 744 1121 746Z" fill="#3a6cc0" opacity="0.6"/>
<text x="1134" y="757.5" text-anchor="middle" font-family="Liberation Sans" font-weight="bold" font-size="25" fill="#fff">?</text>
<path d="M1164.3 751.4 L 1168.5 746.7 L 1172.8 751.4 Z" fill="#e8f0f2"/>
<path d="M1186 741 L 1186 756" stroke="#fff" stroke-width="1.3"/>
<path d="M1187 741.5 C 1190 740 1192 743 1196 741.5 L 1196 748 C 1192 749.5 1190 746.5 1187 748 Z" fill="#fff"/>
<circle cx="1196" cy="751.5" r="4.6" fill="#e02828" stroke="#fff" stroke-width="0.8"/>
<path d="M1194 749.5 L 1198 753.5 M1198 749.5 L 1194 753.5" stroke="#fff" stroke-width="1.1"/>
<rect x="1210" y="744" width="8.5" height="11" fill="none" stroke="#fff" stroke-width="1.2"/>
<rect x="1212.5" y="742" width="8.5" height="11" fill="#2a5560" stroke="#fff" stroke-width="1.2"/>
<path d="M1216 745 L 1216 742 M1219 745 L 1219 742 M1215 745 L 1220.5 745 L 1220.5 749 L 1217.8 751 L 1217.8 755" stroke="#fff" stroke-width="1.2" fill="none"/>
<g fill="#fff"><rect x="1233" y="752" width="2" height="2"/><rect x="1236" y="750" width="2" height="4"/><rect x="1239" y="748" width="2" height="6"/><rect x="1242" y="745.5" width="2" height="8.5"/><rect x="1245.5" y="743" width="2.5" height="11" fill="#9ab0b4"/></g>
<path d="M1257.5 745.5 L 1260.5 745.5 L 1264.5 741.5 L 1264.5 755.5 L 1260.5 751.5 L 1257.5 751.5 Z" fill="#f0f4f4"/>
<path d="M1266.5 745.5 C 1268 747 1268 750 1266.5 751.5 M1269 743 C 1272 746 1272 751 1269 754" fill="none" stroke="#fff" stroke-width="1.1"/>
<text x="1290.5" y="745.5" font-family="Liberation Sans" font-size="12" fill="#fff">10:53 AM</text>
<text x="1286.5" y="762" font-family="Liberation Sans" font-size="12" fill="#fff">11/24/2015</text>
<rect x="1352" y="730" width="14" height="38" fill="#2a5a66" stroke="#7a9ca4" stroke-width="1"/>
</svg>

<svg class="a" style="left:1260px;top:0" width="106" height="21" viewBox="1260 0 106 21">
<defs><linearGradient id="wb" x1="0" y1="0" x2="0" y2="1"><stop offset="0" stop-color="#9cb4bc"/><stop offset="0.5" stop-color="#6e8e98"/><stop offset="0.55" stop-color="#4a6e78"/><stop offset="1" stop-color="#5e8088"/></linearGradient>
<linearGradient id="wc" x1="0" y1="0" x2="0" y2="1"><stop offset="0" stop-color="#e8a090"/><stop offset="0.5" stop-color="#d05838"/><stop offset="0.55" stop-color="#c03010"/><stop offset="1" stop-color="#d86040"/></linearGradient></defs>
<path d="M1261 0 L1261 15 Q1261 18 1264 18 L1315 18 L1315 0 Z" fill="url(#wb)" stroke="#2a4a52" stroke-width="1"/>
<line x1="1288.5" y1="0" x2="1288.5" y2="18" stroke="#2a4a52"/>
<path d="M1315 0 L1315 18 L1360 18 Q1363 18 1363 15 L1363 0 Z" fill="url(#wc)" stroke="#4a2a22" stroke-width="1"/>
<rect x="1270" y="9" width="10" height="3" fill="#fff" stroke="#333" stroke-width="0.6"/>
<rect x="1297" y="5.5" width="8" height="7" fill="none" stroke="#fff" stroke-width="1.8"/>
<rect x="1294.5" y="8" width="8" height="7" fill="#5a7c86" stroke="#fff" stroke-width="1.8"/>
<path d="M1334.5 4 L1343.5 13 M1343.5 4 L1334.5 13" stroke="#fff" stroke-width="2.6"/>
</svg>
</body></html>
